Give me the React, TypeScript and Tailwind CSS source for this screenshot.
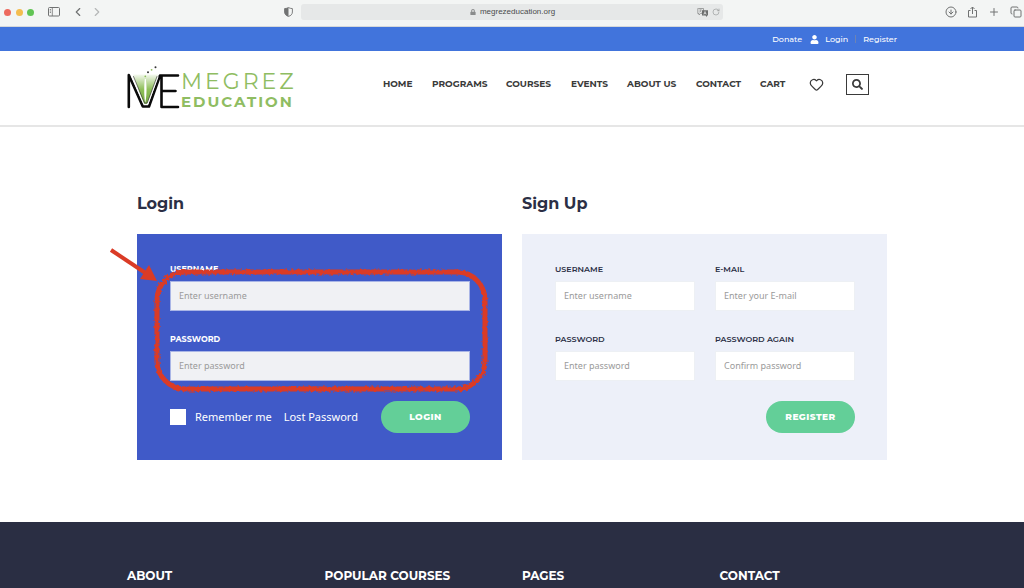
import { useState } from 'react'
import type { FormEvent, InputHTMLAttributes } from 'react'
import { ChevronLeft, ChevronRight, CircleArrowDown, Copy, Heart, Plus, RotateCw } from 'lucide-react'
import { FaLock, FaSearch, FaUser } from 'react-icons/fa'

const navLinks = [
  { label: 'HOME', width: 'w-[31px]' },
  { label: 'PROGRAMS', width: 'w-[56px]' },
  { label: 'COURSES', width: 'w-[47px]' },
  { label: 'EVENTS', width: 'w-[38px]' },
  { label: 'ABOUT US', width: 'w-[51px]' },
  { label: 'CONTACT', width: 'w-[46px]' },
  { label: 'CART', width: 'w-[28px]' },
]

const footerColumns = ['ABOUT', 'POPULAR COURSES', 'PAGES', 'CONTACT']

function BrowserBar() {
  return (
    <div className="grid h-[27px] grid-cols-[1fr_422px_1fr] items-center border-b border-[#d5d8da] bg-[#f3f5f4] pb-[2px] text-[#707272]">
      <div className="flex items-center pl-1">
        <span className="size-[7px] rounded-full bg-[#ed6a5e]" />
        <span className="ml-[5px] size-[7px] rounded-full bg-[#f4bd4f]" />
        <span className="ml-[4px] size-[7px] rounded-full bg-[#61c454]" />
        <button aria-label="Sidebar" className="ml-[14px]">
          <svg width="12" height="10" viewBox="0 0 12 10" fill="none" stroke="currentColor">
            <rect x="0.5" y="0.5" width="11" height="8.5" rx="1" />
            <path d="M4.3 0.5v8.5M1.8 2.5h1.2M1.8 4h1.2M1.8 5.5h1.2" strokeWidth="0.8" />
          </svg>
        </button>
        <button aria-label="Back" className="ml-[11px]">
          <ChevronLeft size={14} strokeWidth={2} />
        </button>
        <button aria-label="Forward" className="ml-[5px] text-[#b5b7b7]">
          <ChevronRight size={14} strokeWidth={2} />
        </button>
        <button aria-label="Privacy report" className="mr-2 ml-auto">
          <svg width="9" height="10" viewBox="0 0 9 10" fill="none" stroke="currentColor">
            <path d="M4.5 0.6C5.8 1.3 7 1.5 8.4 1.6V5C8.4 7.3 6.800 8.700 4.500 9.400C2.200 8.700 0.600 7.300 0.600 5V1.600C2 1.500 3.200 1.300 4.500 0.600Z" strokeWidth="0.900" />
            <path d="M4.500 0.600V9.400C2.200 8.700 0.600 7.300 0.600 5V1.600C2 1.500 3.200 1.300 4.500 0.600Z" fill="currentColor" stroke="none" />
          </svg>
        </button>
      </div>
      <div className="flex h-4 items-center rounded-[3px] bg-[#e6e8e8] px-[3px]">
        <div className="flex flex-1 items-center justify-center gap-1 pl-6 font-['Liberation_Sans',sans-serif] text-[8px] text-[#4a4c4c]">
          <FaLock size={6} className="text-[#8a8c8c]" />
          <span>megrezeducation.org</span>
        </div>
        <svg width="12" height="9" viewBox="0 0 12 9" fill="none">
          <path d="M1.5 0.5H6.5V5.5H3.5L2 7V5.5H0.8V0.5Z" stroke="#8a8c8c" strokeWidth="0.8" />
          <path d="M2.2 2H5M3.6 1.5C3.6 3 3 4 2.2 4.3M3 3 4.6 4.3" stroke="#8a8c8c" strokeWidth="0.6" />
          <path d="M5 2.2H11V7.5H10V9L8.5 7.5H5Z" fill="#6c6e6e" />
          <path d="M6.8 6.5 8 3.5 9.2 6.5M7.2 5.5H8.8" stroke="#e6e8e8" strokeWidth="0.7" />
        </svg>
        <RotateCw size={8} className="ml-[3px] text-[#999b9b]" />
      </div>
      <div className="flex items-center justify-end gap-[10px] pr-[2px]">
        <CircleArrowDown size={12} />
        <svg width="11" height="12" viewBox="0 0 11 12" fill="none" stroke="currentColor" strokeWidth="1">
          <path d="M3.5 4.5H1.5V11H9.5V4.5H7.5M5.5 8V1M3.5 3 5.5 1 7.5 3" />
        </svg>
        <Plus size={12} />
        <Copy size={12} />
      </div>
    </div>
  )
}

function Logo() {
  return (
    <a href="#" aria-label="Megrez Education" className="flex items-end pb-[2px]">
      <svg width="54" height="46" viewBox="127 64 54 46" fill="none" strokeLinecap="round" strokeLinejoin="round">
        <defs>
          <linearGradient id="leaf" x1="0" y1="0" x2="0" y2="1">
            <stop offset="0" stopColor="#8fbf5a" stopOpacity="0.1" />
            <stop offset="0.5" stopColor="#8fbf5a" />
            <stop offset="1" stopColor="#74a840" />
          </linearGradient>
        </defs>
        <path d="M133 74.5H158L147 104H144Z" fill="url(#leaf)" />
        <path d="M144.8 79C143.8 88 144.2 98 145.2 103C146.6 97 147 88 145.8 79Z" fill="#fff" />
        <path d="M128.8 107V75L142.8 106.5H149L160 75.5H178M161.5 76V107H178M162 91H175.5" stroke="#0a0a0a" strokeWidth="2.6" />
        <path d="M132 77 144 104.3H147.8L158 77" stroke="#fff" strokeWidth="1" />
        <path d="M133.500 76.500 144.500 103H147.200L157 76.500" stroke="#444" strokeWidth="0.7" />
        <circle cx="145.3" cy="76.3" r="0.9" fill="#8fbf5a" />
        <circle cx="148" cy="72.3" r="1" fill="#333" />
        <circle cx="151.6" cy="69.8" r="0.9" fill="#8fbf5a" />
        <circle cx="155.5" cy="67.3" r="1" fill="#333" />
      </svg>
      <span className="flex flex-col text-[#8fbd62]">
        <span className="text-[22px] leading-6 tracking-[3px]">MEGREZ</span>
        <span className="text-[15px] leading-4 font-bold tracking-[2px]">EDUCATION</span>
      </span>
    </a>
  )
}

type FieldProps = InputHTMLAttributes<HTMLInputElement> & { id: string; label: string; dark?: boolean }

function Field({ id, label, dark, ...props }: FieldProps) {
  return (
    <div>
      <label
        htmlFor={id}
        className={`mb-1 block h-4 text-[8px] leading-4 ${dark ? 'font-bold text-white' : 'font-semibold text-[#2b2f45]'}`}
      >
        {label}
      </label>
      <input
        id={id}
        className={`block h-[30px] w-full border px-2 pb-[2px] font-['Noto_Sans',sans-serif] text-[9px] outline-none placeholder:text-[#9a9a9a] ${
          dark ? 'border-[#a9b5e6] bg-[#f0f1f4]' : 'border-[#edf0f4] bg-white'
        }`}
        {...props}
      />
    </div>
  )
}

// hand drawn marker ring and arrow around the login fields
function Marker() {
  return (
    <>
      <svg className="pointer-events-none absolute top-[38px] right-[17px] left-5 h-[117px] w-[calc(100%-37px)] overflow-visible">
        <filter id="rough" x="-10%" y="-10%" width="120%" height="120%">
          <feTurbulence type="fractalNoise" baseFrequency="0.35" numOctaves="2" seed="4" />
          <feDisplacementMap in="SourceGraphic" scale="4" />
        </filter>
        <rect width="100%" height="100%" rx="28" fill="none" stroke="#da3b26" strokeWidth="5" filter="url(#rough)" />
      </svg>
      <svg className="pointer-events-none absolute top-3 -left-7" width="50" height="38" viewBox="0 0 50 38">
        <path d="M2 4 38 28" stroke="#da3b26" strokeWidth="4" />
        <path d="M48 35 31 33 40 19Z" fill="#da3b26" />
      </svg>
    </>
  )
}

export default function App() {
  const [remember, setRemember] = useState(false)

  const handleSubmit = (e: FormEvent) => {
    e.preventDefault()
  }

  return (
    <div className="flex min-h-screen flex-col bg-white font-[Montserrat,Inter,sans-serif]">
      <BrowserBar />

      <div className="bg-[#4174dc] text-[8px] font-medium text-white">
        <div className="mx-auto flex h-6 max-w-[770px] items-center justify-end">
          <a href="#">Donate</a>
          <FaUser size={9} className="mr-[6px] ml-2" />
          <a href="#">Login</a>
          <span className="mx-[7px] h-2 w-px bg-[#6d83b4]" />
          <a href="#">Register</a>
        </div>
      </div>

      <header className="border-b-2 border-[#e6e6e6]">
        <div className="mx-auto flex h-[74px] max-w-[770px] items-center justify-between pr-7">
          <Logo />
          <nav className="flex items-center gap-[18px] pb-2 text-[9px] font-bold whitespace-nowrap text-[#3a3a3a]">
            {navLinks.map((link) => (
              <a key={link.label} href="#" className={link.width}>
                {link.label}
              </a>
            ))}
            <a href="#" aria-label="Wishlist" className="ml-[3px]">
              <Heart size={15} strokeWidth={2} />
            </a>
            <button
              aria-label="Search"
              className="ml-1 flex h-[21px] w-[23px] items-center justify-center border border-[#3a3a3a]"
            >
              <FaSearch size={11} />
            </button>
          </nav>
        </div>
      </header>

      <main className="mx-auto grid w-full max-w-[770px] grid-cols-2 gap-5 px-[10px] pt-[65px] pb-[62px]">
        <section>
          <h2 className="mb-[18px] text-[16px] leading-6 font-bold text-[#2b2f45]">Login</h2>
          <form onSubmit={handleSubmit} className="relative bg-[#405ac8] py-[27px] pr-8 pl-[33px]">
            <div className="grid gap-5">
              <Field dark id="login-username" label="USERNAME" placeholder="Enter username" />
              <Field dark id="login-password" label="PASSWORD" type="password" placeholder="Enter password" />
            </div>
            <div className="mt-5 flex items-center font-['Noto_Sans',sans-serif] text-[11px] whitespace-nowrap text-white">
              <input
                id="remember"
                type="checkbox"
                checked={remember}
                onChange={(e) => setRemember(e.target.checked)}
                className="size-4 appearance-none bg-white checked:bg-[#63cf98]"
              />
              <label htmlFor="remember" className="ml-[9px]">Remember me</label>
              <a href="#" className="ml-3">Lost Password</a>
              <button className="ml-auto h-8 w-[89px] rounded-full bg-[#63cf98] font-[Montserrat,Inter,sans-serif] text-[9px] font-extrabold tracking-wider">
                LOGIN
              </button>
            </div>
            <Marker />
          </form>
        </section>

        <section>
          <h2 className="mb-[18px] text-[16px] leading-6 font-bold text-[#2b2f45]">Sign Up</h2>
          <form onSubmit={handleSubmit} className="bg-[#edf0f9] py-[27px] pr-8 pl-[33px]">
            <div className="grid grid-cols-2 gap-5">
              <Field id="username" label="USERNAME" placeholder="Enter username" />
              <Field id="email" label="E-MAIL" type="email" placeholder="Enter your E-mail" />
              <Field id="password" label="PASSWORD" type="password" placeholder="Enter password" />
              <Field id="password-again" label="PASSWORD AGAIN" type="password" placeholder="Confirm password" />
            </div>
            <button className="mt-5 ml-auto block h-8 w-[89px] rounded-full bg-[#63cf98] text-[9px] font-extrabold tracking-wider text-white">
              REGISTER
            </button>
          </form>
        </section>
      </main>

      <footer className="flex-1 bg-[#2a2e43]">
        <div className="mx-auto grid max-w-[770px] grid-cols-4 gap-5 pt-11">
          {footerColumns.map((title) => (
            <h3 key={title} className="text-[12px] leading-5 font-bold whitespace-nowrap text-white">
              {title}
            </h3>
          ))}
        </div>
      </footer>
    </div>
  )
}
